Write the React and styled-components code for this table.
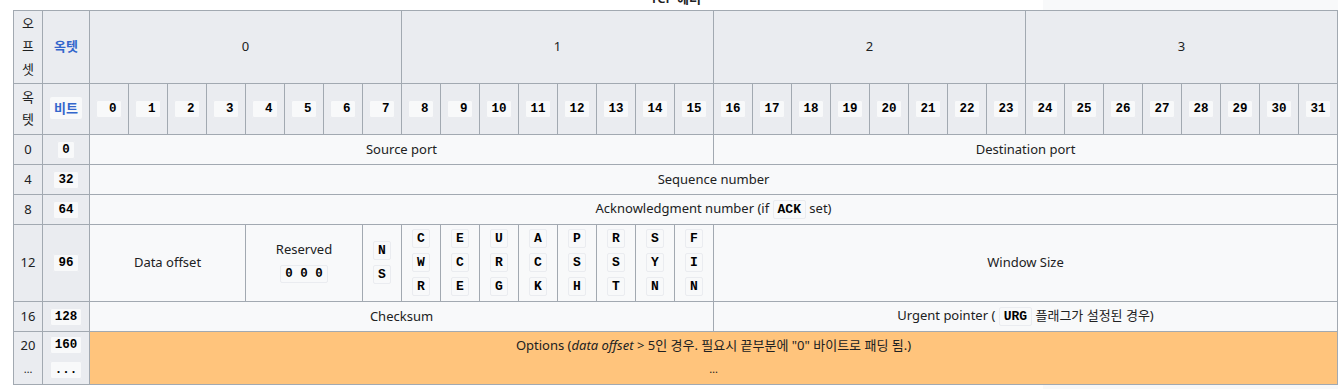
import React from "react";
import styled, { createGlobalStyle } from "styled-components";

const GlobalStyle = createGlobalStyle`
  html, body {
    margin: 0;
    padding: 0;
  }
  body {
    background: linear-gradient(to right, #ffffff 1043px, #f8f9fa 1043px);
    font-family: "Noto Sans", "Noto Sans CJK KR", sans-serif;
    font-size: 13px;
    color: #202122;
    overflow: hidden;
  }
`;

const Page = styled.div`
  padding: 10px 0 0 13px;
`;

const Figure = styled.div`
  width: max-content;
`;

const Caption = styled.div`
  margin-top: -12px;
  height: 12px;
  line-height: 22px;
  text-align: center;
  font-weight: 600;
  transform: translateY(-11px);
`;

const Grid = styled.div`
  display: grid;
  grid-template-columns: 29px 47px repeat(32, 39px);
  grid-template-rows: 73px 51px 30px 30px 30px 77px 30px 53px;
  border-top: 1px solid #a2a9b1;
  border-left: 1px solid #a2a9b1;
  width: max-content;
`;

const tones = {
  head: "#eaecf0",
  body: "#f8f9fa",
  options: "#ffc47c",
};

const CellBox = styled.div`
  grid-column: span ${(p) => p.$span || 1};
  border-right: 1px solid #a2a9b1;
  border-bottom: 1px solid #a2a9b1;
  background: ${(p) => tones[p.$tone || "body"]};
  display: flex;
  align-items: center;
  justify-content: center;
  text-align: center;
  padding: 0 ${(p) => (p.$tight ? 0 : 4)}px 2px;
  line-height: ${(p) => p.$lh || 22}px;
  min-width: 0;
`;

const Inner = styled.div`
  min-width: 0;
`;

function Cell({ children, span, tone, tight, lh }) {
  return (
    <CellBox $span={span} $tone={tone} $tight={tight} $lh={lh}>
      <Inner>{children}</Inner>
    </CellBox>
  );
}

const Code = styled.code`
  font-family: "Liberation Mono", "DejaVu Sans Mono", monospace;
  font-size: ${(p) => (p.$large ? 13 : 12.5)}px;
  font-weight: 700;
  white-space: pre;
  color: #000;
  background: #f8f9fa;
  border: 1px solid #eaecf0;
  border-radius: 2px;
  padding: 1px 4px;
`;

const LinkCode = styled.span`
  font-weight: 700;
  color: #3366cc;
  background: #f8f9fa;
  padding: 2px 4px;
  border-radius: 2px;
`;

const Link = styled.span`
  font-weight: 700;
  color: #3366cc;
`;

const Line = styled.div``;

const Ellipsis = styled.span`
  font-size: 11px;
`;

const flags = ["CWR", "ECE", "URG", "ACK", "PSH", "RST", "SYN", "FIN"];

// one syllable or letter per line, for the narrow columns
function Column({ text, code }) {
  return (
    <>
      {text.split("").map((ch, i) => (
        <Line key={i}>{code ? <Code $large>{ch}</Code> : ch}</Line>
      ))}
    </>
  );
}

export default function App() {
  const bits = Array.from({ length: 32 }, (_, i) => i);
  return (
    <>
      <GlobalStyle />
      <Page>
        <Figure>
          <Caption>TCP 헤더</Caption>
          <Grid>
            {/* octet header row */}
            <Cell tone="head" tight lh={23}>
              <Column text="오프셋" />
            </Cell>
            <Cell tone="head">
              <Link>옥텟</Link>
            </Cell>
            {[0, 1, 2, 3].map((o) => (
              <Cell key={o} tone="head" span={8}>
                {o}
              </Cell>
            ))}

            {/* bit header row */}
            <Cell tone="head" tight>
              <Column text="옥텟" />
            </Cell>
            <Cell tone="head">
              <LinkCode>비트</LinkCode>
            </Cell>
            {bits.map((b) => (
              <Cell key={b} tone="head" tight>
                <Code>{b < 10 ? ` ${b}` : String(b)}</Code>
              </Cell>
            ))}

            {/* word 0 */}
            <Cell tone="head" tight>0</Cell>
            <Cell tone="head" tight>
              <Code>0</Code>
            </Cell>
            <Cell span={16}>Source port</Cell>
            <Cell span={16}>Destination port</Cell>

            {/* word 1 */}
            <Cell tone="head" tight>4</Cell>
            <Cell tone="head" tight>
              <Code>32</Code>
            </Cell>
            <Cell span={32}>Sequence number</Cell>

            {/* word 2 */}
            <Cell tone="head" tight>8</Cell>
            <Cell tone="head" tight>
              <Code>64</Code>
            </Cell>
            <Cell span={32}>
              Acknowledgment number (if <Code $large>ACK</Code> set)
            </Cell>

            {/* word 3 */}
            <Cell tone="head" tight>12</Cell>
            <Cell tone="head" tight>
              <Code>96</Code>
            </Cell>
            <Cell span={4}>Data offset</Cell>
            <Cell span={3} lh={23}>
              <Line>Reserved</Line>
              <Line>
                <Code>0 0 0</Code>
              </Line>
            </Cell>
            <Cell tight lh={23}>
              <Column text="NS" code />
            </Cell>
            {flags.map((f) => (
              <Cell key={f} tight lh={23}>
                <Column text={f} code />
              </Cell>
            ))}
            <Cell span={16}>Window Size</Cell>

            {/* word 4 */}
            <Cell tone="head" tight>16</Cell>
            <Cell tone="head" tight>
              <Code>128</Code>
            </Cell>
            <Cell span={16}>Checksum</Cell>
            <Cell span={16}>
              Urgent pointer ( <Code $large>URG</Code> 플래그가 설정된 경우)
            </Cell>

            {/* word 5 and beyond */}
            <Cell tone="head" tight lh={23}>
              <Line>20</Line>
              <Line>
                <Ellipsis>…</Ellipsis>
              </Line>
            </Cell>
            <Cell tone="head" tight lh={23}>
              <Line>
                <Code>160</Code>
              </Line>
              <Line>
                <Code>...</Code>
              </Line>
            </Cell>
            <Cell tone="options" span={32} lh={23}>
              <Line>
                Options (<i>data offset</i> &gt; 5인 경우. 필요시 끝부분에 "0" 바이트로 패딩 됨.)
              </Line>
              <Line>
                <Ellipsis>…</Ellipsis>
              </Line>
            </Cell>
          </Grid>
        </Figure>
      </Page>
    </>
  );
}
